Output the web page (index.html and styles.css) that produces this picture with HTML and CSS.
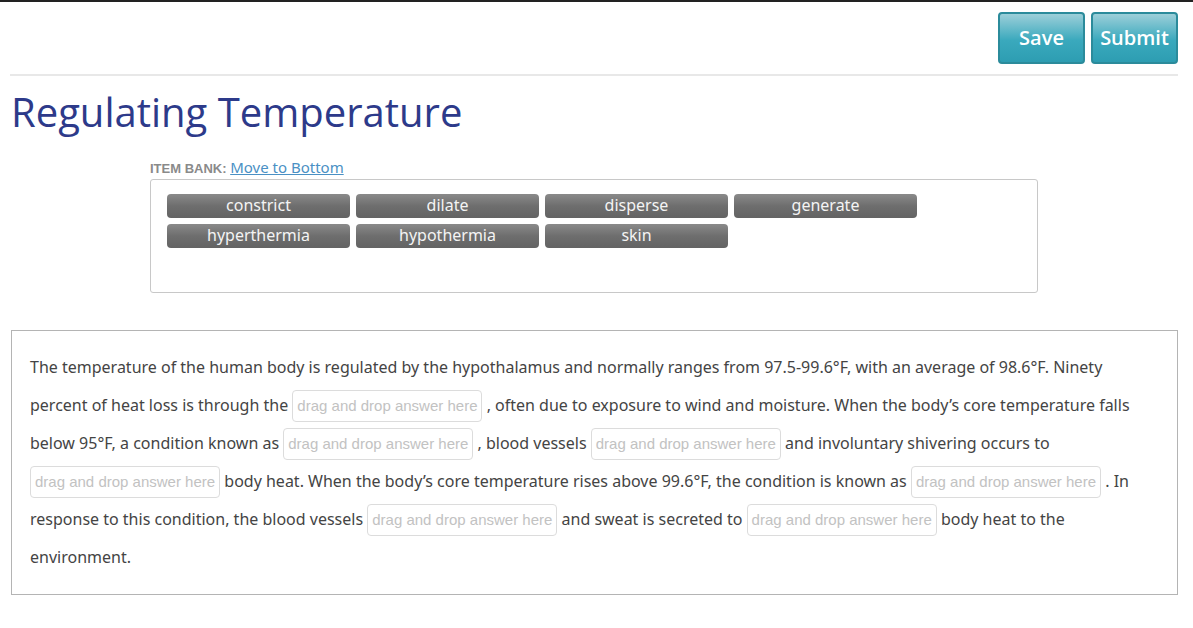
FILE: index.html
```html
<!DOCTYPE html>
<html>
<head>
<meta charset="utf-8">
<link rel="stylesheet" href="styles.css">
</head>
<body>
<div class="page">
  <div class="toolbar">
    <button class="btn">Save</button>
    <button class="btn">Submit</button>
  </div>
  <hr class="rule">
  <h1 class="title">Regulating Temperature</h1>
  <div class="bank-wrap">
    <div class="bank-label"><span class="bank-caption">ITEM BANK:</span> <a href="#" class="bank-link">Move to Bottom</a></div>
    <div class="bank">
      <div class="chip">constrict</div>
      <div class="chip">dilate</div>
      <div class="chip">disperse</div>
      <div class="chip">generate</div>
      <div class="chip">hyperthermia</div>
      <div class="chip">hypothermia</div>
      <div class="chip">skin</div>
    </div>
  </div>
  <div class="passage">
    <p>The temperature of the human body is regulated by the hypothalamus and normally ranges from 97.5-99.6°F, with an average of 98.6°F. Ninety percent of heat loss is through the <span class="drop">drag and drop answer here</span> , often due to exposure to wind and moisture. When the body’s core temperature falls below 95°F, a condition known as <span class="drop">drag and drop answer here</span> , blood vessels <span class="drop">drag and drop answer here</span> and involuntary shivering occurs to <span class="drop">drag and drop answer here</span> body heat. When the body’s core temperature rises above 99.6°F, the condition is known as <span class="drop">drag and drop answer here</span> . In response to this condition, the blood vessels <span class="drop">drag and drop answer here</span> and sweat is secreted to <span class="drop">drag and drop answer here</span> body heat to the environment.</p>
  </div>
</div>
</body>
</html>
```
FILE: styles.css
```css
html, body {
  margin: 0;
  padding: 0;
  background: #fff;
}
body {
  border-top: 2px solid #222;
  font-family: "Noto Sans", "Open Sans", sans-serif;
}
.page {
  padding: 0 15px 0 10px;
}
.toolbar {
  display: flex;
  justify-content: flex-end;
  gap: 6px;
  padding-top: 10px;
}
.btn {
  height: 52px;
  width: 87px;
  padding: 0;
  border: 2px solid #2b8b9b;
  border-radius: 4px;
  background: linear-gradient(#9ccfd9, #3aa9bd 55%, #2d9db2);
  color: #fff;
  font-family: "Open Sans", "Noto Sans", sans-serif;
  font-weight: 600;
  font-size: 20px;
  line-height: 46px;
  cursor: pointer;
}
.rule {
  border: 0;
  border-top: 2px solid #e8e8e8;
  margin: 10px 0 0 0;
}
.title {
  margin: 12px 0 0 1px;
  font-family: "Open Sans", sans-serif;
  font-weight: 400;
  font-size: 40px;
  line-height: 48px;
  color: #2d3a8a;
  letter-spacing: 0;
}
.bank-wrap {
  margin: 22px 0 0 140px;
  width: 888px;
}
.bank-label {
  font-size: 14px;
  line-height: 18px;
}
.bank-caption {
  font-family: "Liberation Sans", Arial, sans-serif;
  font-weight: 700;
  font-size: 13px;
  color: #8a8a8a;
}
.bank-link {
  color: #4a90c4;
  text-decoration: underline;
  font-size: 15px;
}
.bank {
  margin-top: 1px;
  border: 1px solid #c8c8c8;
  border-radius: 3px;
  height: 98px;
  padding: 14px 0 0 16px;
  display: flex;
  flex-wrap: wrap;
  align-content: flex-start;
  gap: 6px 6px;
}
.chip {
  width: 183px;
  height: 24px;
  box-sizing: border-box;
  border-radius: 4px;
  background: linear-gradient(#8a8a8a, #6e6e6e 50%, #636363);
  color: #f4f4f4;
  text-align: center;
  font-size: 16px;
  line-height: 22px;
}
.passage {
  margin: 37px 0 0 1px;
  border: 1px solid #b4b4b4;
  padding: 17px 20px 18px 18px;
}
.passage p {
  margin: 0;
  font-size: 16px;
  line-height: 38px;
  color: #444;
}
.drop {
  display: inline-block;
  box-sizing: border-box;
  height: 32px;
  line-height: 30px;
  padding: 0 4px;
  border: 1px solid #dcdcdc;
  border-radius: 4px;
  font-family: "Liberation Sans", Arial, sans-serif;
  font-size: 15px;
  color: #c2c2c2;
}
```
